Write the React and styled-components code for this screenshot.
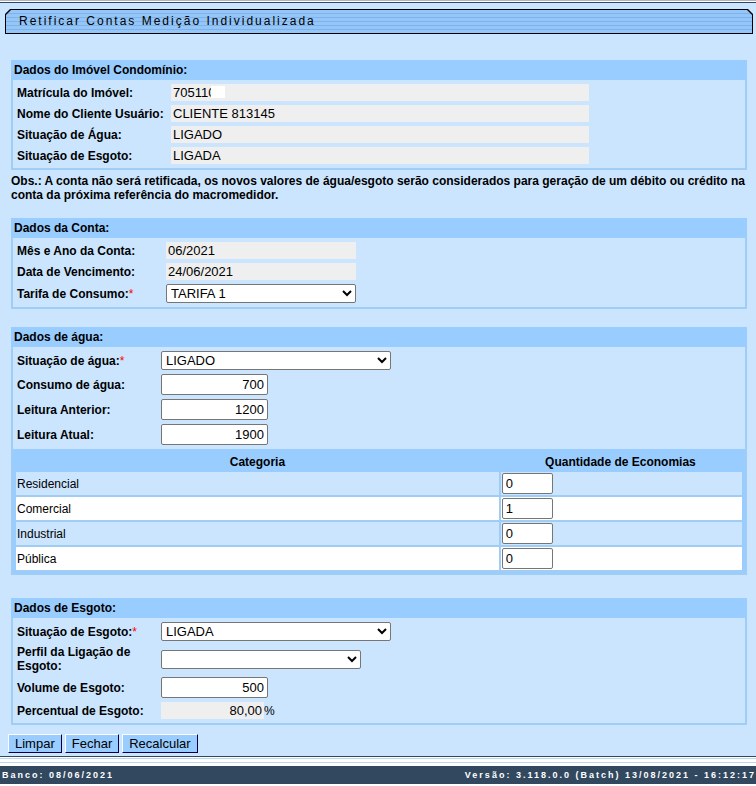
import React from "react";
import styled, { createGlobalStyle } from "styled-components";

const GlobalStyle = createGlobalStyle`
  * {
    box-sizing: border-box;
  }

  body {
    margin: 0;
    background: #fff;
    color: #000;
    font: 12px/14px "Liberation Sans", Arial, sans-serif;
  }
`;

const Page = styled.div`
  border-top: 1px solid #b4b4bc;
`;

const Main = styled.main`
  margin-top: 1px;
  padding: 6px 3px 3px 5px;
  background: #cbe5fe;
  border-top: 1px solid #31485f;
  border-bottom: 1px solid #31485f;
`;

const TitleOutline = styled.div`
  padding: 1px;
  margin-bottom: 26px;
  background: #000;
  clip-path: polygon(
    5px 0,
    calc(100% - 5px) 0,
    100% 5px,
    100% 100%,
    0 100%,
    0 5px
  );
`;

const Title = styled.h1`
  margin: 0;
  padding: 0 13px;
  background: repeating-linear-gradient(
    #94c6fa 0 3px,
    #7fb2e6 3px 4px
  );
  clip-path: polygon(
    5px 0,
    calc(100% - 5px) 0,
    100% 5px,
    100% 100%,
    0 100%,
    0 5px
  );
  font-size: 12px;
  font-weight: normal;
  line-height: 23px;
  letter-spacing: 2px;
`;

const Content = styled.form`
  display: flex;
  flex-direction: column;
  margin: 0 6px;
`;

const Panel = styled.section`
  margin-bottom: ${({ $gap }) => $gap}px;
  border: 2px solid #9fcdf5;
  border-top: 0;
`;

const PanelTitle = styled.h2`
  margin: 0 -2px;
  padding: 0 3px;
  background: #99ccff;
  font-size: 12px;
  line-height: 20px;
`;

const Fields = styled.div`
  display: grid;
  grid-template-columns: ${({ $label }) => $label}px 1fr;
  align-items: center;
  row-gap: 4px;
  padding: 4px;
`;

const Label = styled.label`
  font-weight: bold;
`;

const Required = styled.span`
  color: #f00;
  font-weight: normal;
`;

const Control = styled.div`
  display: flex;
  align-items: center;
  position: relative;
`;

const ReadOnly = styled.input`
  width: ${({ $width }) => $width}px;
  height: 17px;
  padding: 0 2px;
  border: 0;
  background: #efefef;
  color: #000;
  font: 13px "Liberation Sans", Arial, sans-serif;
  text-align: ${({ $align }) => $align || "left"};
`;

const Mask = styled.span`
  position: absolute;
  left: 40px;
  top: 2px;
  width: 14px;
  height: 12px;
  background: #fff;
`;

const TextBox = styled.input`
  display: block;
  width: ${({ $width }) => $width}px;
  height: 21px;
  padding: 1px 3px;
  border: 1px solid #767676;
  border-radius: 2px;
  background: #fff;
  color: #000;
  font: 13px "Liberation Sans", Arial, sans-serif;
  text-align: ${({ $align }) => $align || "left"};
`;

const Select = styled.select`
  width: ${({ $width }) => $width}px;
  height: 19px;
  border: 1px solid #767676;
  border-radius: 2px;
  background: #fff;
  color: #000;
  font: 13px "Liberation Sans", Arial, sans-serif;
`;

const Note = styled.p`
  margin: 0 0 16px;
  font-weight: bold;
`;

const Table = styled.table`
  width: 100%;
  border: 3px solid #99ccff;
  border-top: 0;
  border-bottom-width: 1px;
  border-collapse: separate;
  border-spacing: 0;
  background: #99ccff;
`;

const HeadCell = styled.th`
  width: ${({ $width }) => $width};
  height: 23px;
  padding: 2px 0 0;
`;

const Row = styled.tr`
  background: ${({ $odd }) => ($odd ? "#fff" : "#cbe5fe")};
`;

const Cell = styled.td`
  padding: 1px;
  border-bottom: 2px solid #9fcdf5;

  & + & {
    border-left: 2px solid #9fcdf5;
  }
`;

const Actions = styled.div`
  display: flex;
  gap: 3px;
  padding: 0 3px;
`;

const Button = styled.button`
  height: 19px;
  padding: 0 6px;
  border: 1px solid;
  border-color: #fff #000040 #000040 #fff;
  background: #99ccff;
  color: #000;
  font: 13px/17px "Liberation Sans", Arial, sans-serif;
`;

const Stripes = styled.div`
  height: 9px;
  background: repeating-linear-gradient(
    #fff 0 1px,
    #bcd9ec 1px 2px,
    #fff 2px 4px
  );
`;

const Footer = styled.footer`
  display: flex;
  justify-content: space-between;
  padding: 0 0 0 2px;
  background: #31485f;
  color: #fff;
  font-size: 9px;
  font-weight: bold;
  line-height: 18px;
  letter-spacing: 2px;
`;

const Field = ({ id, label, required, children }) => (
  <>
    <Label htmlFor={id}>
      {label}
      {required && <Required>*</Required>}
    </Label>
    <Control>{children}</Control>
  </>
);

const categories = [
  { id: "residencial", name: "Residencial", amount: 0 },
  { id: "comercial", name: "Comercial", amount: 1 },
  { id: "industrial", name: "Industrial", amount: 0 },
  { id: "publica", name: "Pública", amount: 0 }
];

const App = () => (
  <Page>
    <GlobalStyle />
    <Main>
      <TitleOutline>
        <Title>Retificar Contas Medição Individualizada</Title>
      </TitleOutline>
      <Content onSubmit={e => e.preventDefault()}>
        <Panel $gap={4}>
          <PanelTitle>Dados do Imóvel Condomínio:</PanelTitle>
          <Fields $label={154}>
            <Field id="matricula" label="Matrícula do Imóvel:">
              <ReadOnly id="matricula" readOnly $width={418} value="705110" />
              <Mask />
            </Field>
            <Field id="cliente" label="Nome do Cliente Usuário:">
              <ReadOnly id="cliente" readOnly $width={418} value="CLIENTE 813145" />
            </Field>
            <Field id="imovelAgua" label="Situação de Água:">
              <ReadOnly id="imovelAgua" readOnly $width={418} value="LIGADO" />
            </Field>
            <Field id="imovelEsgoto" label="Situação de Esgoto:">
              <ReadOnly id="imovelEsgoto" readOnly $width={418} value="LIGADA" />
            </Field>
          </Fields>
        </Panel>

        <Note>
          Obs.: A conta não será retificada, os novos valores de água/esgoto
          serão considerados para geração de um débito ou crédito na conta da
          próxima referência do macromedidor.
        </Note>

        <Panel $gap={18}>
          <PanelTitle>Dados da Conta:</PanelTitle>
          <Fields $label={149}>
            <Field id="mesAno" label="Mês e Ano da Conta:">
              <ReadOnly id="mesAno" readOnly $width={190} value="06/2021" />
            </Field>
            <Field id="vencimento" label="Data de Vencimento:">
              <ReadOnly id="vencimento" readOnly $width={190} value="24/06/2021" />
            </Field>
            <Field id="tarifa" label="Tarifa de Consumo:" required>
              <Select id="tarifa" $width={190}>
                <option>TARIFA 1</option>
              </Select>
            </Field>
          </Fields>
        </Panel>

        <Panel $gap={23}>
          <PanelTitle>Dados de água:</PanelTitle>
          <Fields $label={144}>
            <Field id="situacaoAgua" label="Situação de água:" required>
              <Select id="situacaoAgua" $width={230}>
                <option>LIGADO</option>
              </Select>
            </Field>
            <Field id="consumo" label="Consumo de água:">
              <TextBox id="consumo" $width={107} $align="right" defaultValue="700" />
            </Field>
            <Field id="anterior" label="Leitura Anterior:">
              <TextBox id="anterior" $width={107} $align="right" defaultValue="1200" />
            </Field>
            <Field id="atual" label="Leitura Atual:">
              <TextBox id="atual" $width={107} $align="right" defaultValue="1900" />
            </Field>
          </Fields>
          <Table>
            <thead>
              <tr>
                <HeadCell $width="auto">Categoria</HeadCell>
                <HeadCell $width="33.5%">Quantidade de Economias</HeadCell>
              </tr>
            </thead>
            <tbody>
              {categories.map(({ id, name, amount }, i) => (
                <Row key={id} $odd={i % 2 === 1}>
                  <Cell>
                    <label htmlFor={id}>{name}</label>
                  </Cell>
                  <Cell>
                    <TextBox id={id} $width={51} defaultValue={amount} />
                  </Cell>
                </Row>
              ))}
            </tbody>
          </Table>
        </Panel>

        <Panel $gap={9}>
          <PanelTitle>Dados de Esgoto:</PanelTitle>
          <Fields $label={144}>
            <Field id="situacaoEsgoto" label="Situação de Esgoto:" required>
              <Select id="situacaoEsgoto" $width={230}>
                <option>LIGADA</option>
              </Select>
            </Field>
            <Field id="perfil" label="Perfil da Ligação de Esgoto:">
              <Select id="perfil" $width={200}>
                <option></option>
              </Select>
            </Field>
            <Field id="volume" label="Volume de Esgoto:">
              <TextBox id="volume" $width={107} $align="right" defaultValue="500" />
            </Field>
            <Field id="percentual" label="Percentual de Esgoto:">
              <ReadOnly id="percentual" readOnly $width={103} $align="right" value="80,00" />
              <span>%</span>
            </Field>
          </Fields>
        </Panel>
      </Content>
      <Actions>
        <Button type="button">Limpar</Button>
        <Button type="button">Fechar</Button>
        <Button type="button">Recalcular</Button>
      </Actions>
    </Main>
    <Stripes />
    <Footer>
      <span>Banco: 08/06/2021</span>
      <span>Versão: 3.118.0.0 (Batch) 13/08/2021 - 16:12:17</span>
    </Footer>
  </Page>
);

export default App;
